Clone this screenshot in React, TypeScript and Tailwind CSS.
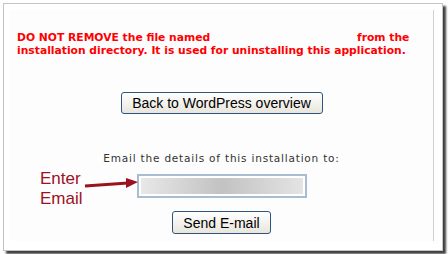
export default function App() {
  return (
    <div className="w-[448px] h-[254px] bg-white pt-[3px] pl-[3px]">
      <div className="w-[440px] h-[248px] border border-[#c4c4c4] bg-white pt-[6px] pl-[6px] shadow-[3px_3px_2px_rgba(0,0,0,0.75)]">
        <div className="relative w-[424px] h-[231px] border-r border-[#d0d0d0] bg-[#fdfdfe] pt-[21px]">
          <p
            className="pl-[7px] text-[10.75px] leading-[13px] font-bold text-[#ff0000]"
            style={{ fontFamily: '"DejaVu Sans", Verdana, sans-serif' }}
          >
            DO NOT REMOVE the file named <span className="inline-block w-[143px]"></span>from the
            <br />
            installation directory. It is used for uninstalling this application.
          </p>

          <div className="flex flex-col items-center">
            <button
              className="mt-[35px] h-[22px] w-[202px] rounded-[3px] border border-[#2f557f] bg-gradient-to-b from-white to-[#e8e6dc] text-[14px] leading-[20px] text-black"
              style={{ fontFamily: '"Liberation Sans", Arial, sans-serif' }}
            >
              Back to WordPress overview
            </button>

            <div
              className="mt-[38px] text-[10.5px] leading-[12px] text-[#333] tracking-[0.8px]"
              style={{ fontFamily: '"DejaVu Sans", Verdana, sans-serif' }}
            >
              Email the details of this installation to:
            </div>

            <div className="mt-[10px] h-[24px] w-[170px] border-2 border-[#a9bcd2] bg-white p-[2px]">
              <div className="h-full w-full bg-gradient-to-r from-[#e8e8e8] via-[#c2c2c2] to-[#e4e4e4]"></div>
            </div>

            <button
              className="mt-[13px] h-[23px] w-[99px] rounded-[3px] border border-[#2f557f] bg-gradient-to-b from-white to-[#e8e6dc] text-[14px] leading-[20px] text-black"
              style={{ fontFamily: '"Liberation Sans", Arial, sans-serif' }}
            >
              Send E-mail
            </button>
          </div>

          <div
            className="absolute left-[30px] top-[159px] flex flex-col text-[17px] leading-[19.5px] text-[#9b111e]"
            style={{ fontFamily: '"Liberation Sans", Arial, sans-serif' }}
          >
            <span>Enter</span>
            <span>Email</span>
          </div>

          <svg className="absolute left-[74px] top-[166px]" width="56" height="14" viewBox="0 0 56 14">
            <line x1="1" y1="10" x2="44" y2="7" stroke="#9b111e" strokeWidth="3" />
            <polygon points="42,2 54,6 42,12" fill="#9b111e" />
          </svg>
        </div>
      </div>
    </div>
  )
}
